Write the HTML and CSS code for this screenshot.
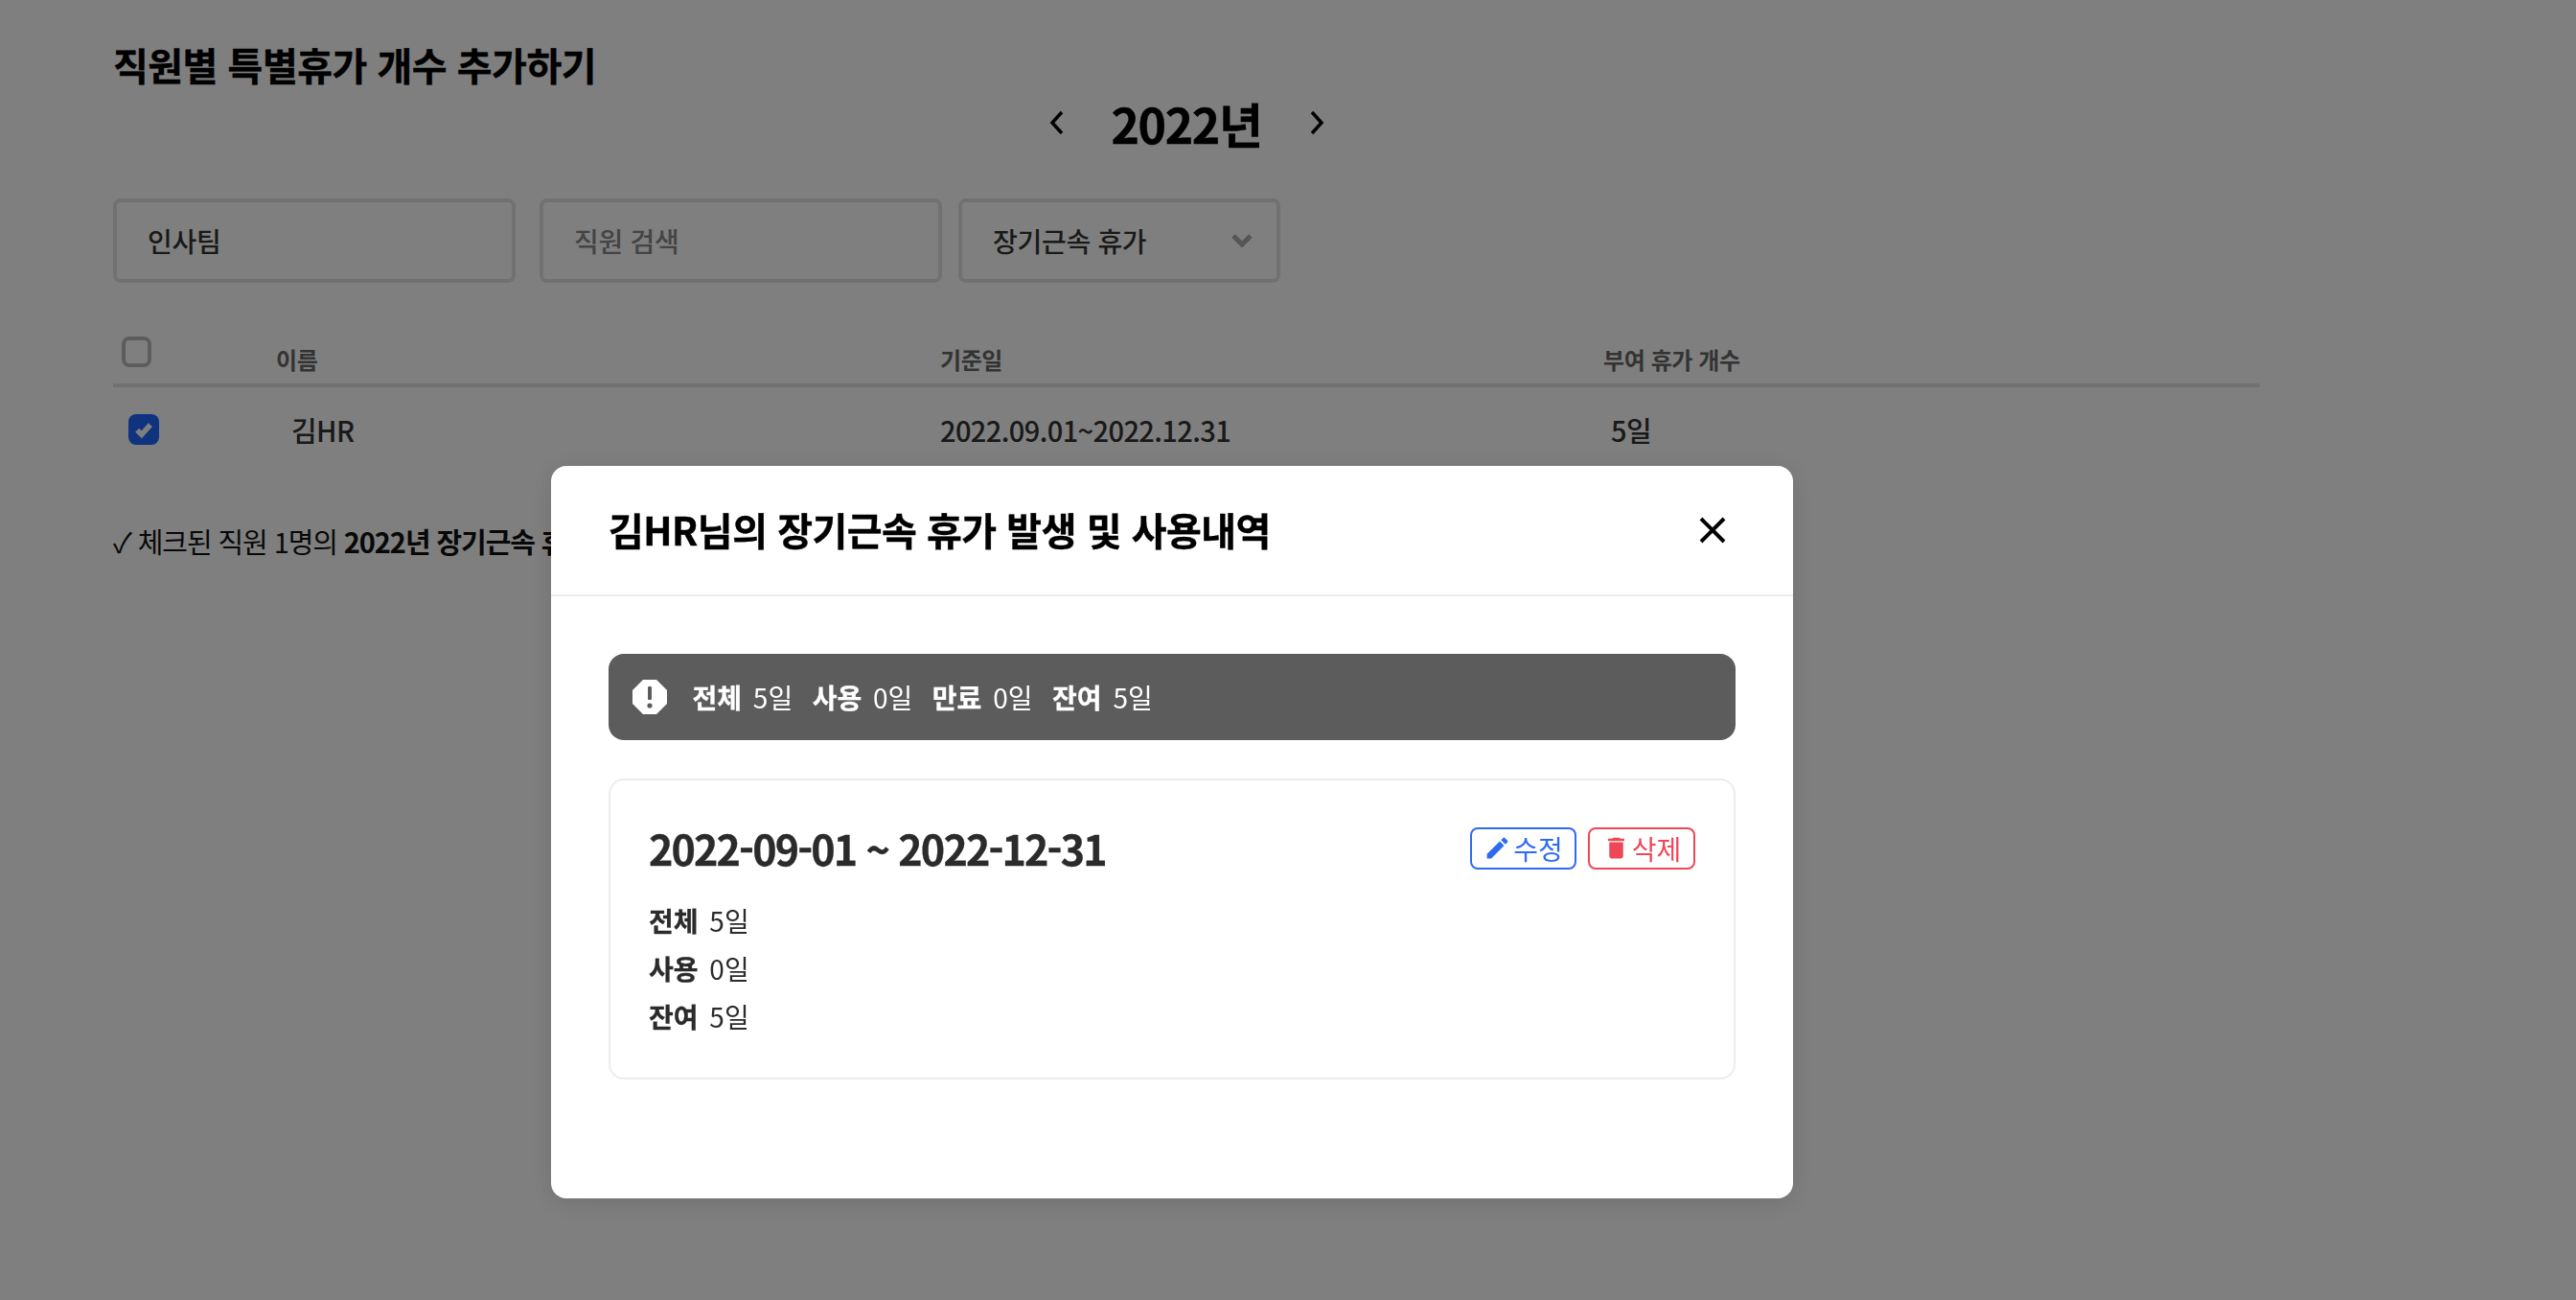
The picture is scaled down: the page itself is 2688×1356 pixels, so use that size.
FILE: index.html
```html
<!DOCTYPE html>
<html lang="ko">
<head>
<meta charset="utf-8">
<title>직원별 특별휴가 개수 추가하기</title>
<link rel="stylesheet" href="styles.css">
</head>
<body>
<main class="page">
  <h1 class="page-title">직원별 특별휴가 개수 추가하기</h1>
  <div class="year-nav">
    <svg class="chev" viewBox="0 0 16 28"><path d="M13 3 3 14l10 11"/></svg>
    <span class="year">2022년</span>
    <svg class="chev" viewBox="0 0 16 28"><path d="M3 3l10 11L3 25"/></svg>
  </div>
  <div class="filters">
    <div class="field field-team">인사팀</div>
    <div class="field field-search">직원 검색</div>
    <div class="field field-type"><span>장기근속 휴가</span>
      <svg class="caret" viewBox="0 0 24 14"><path d="M3 2l9 9 9-9"/></svg>
    </div>
  </div>
  <div class="table">
    <div class="thead">
      <span class="check"></span>
      <span class="th">이름</span>
      <span class="th">기준일</span>
      <span class="th">부여 휴가 개수</span>
    </div>
    <div class="trow">
      <span class="check checked"><svg viewBox="0 0 16 16"><path d="M3 8.500l3.400 3.400L13 4.500"/></svg></span>
      <span class="td td-name">김HR</span>
      <span class="td">2022.09.01~2022.12.31</span>
      <span class="td td-count">5일</span>
    </div>
  </div>
  <p class="summary">✓ 체크된 직원 1명의 <b>2022년 장기근속 휴가</b></p>
</main>

<div class="overlay">
  <section class="modal">
    <header class="modal-head">
      <h2 class="modal-title">김HR님의 장기근속 휴가 발생 및 사용내역</h2>
      <svg class="close" viewBox="0 0 28 28"><path d="M2 2l24 24M26 2 2 26"/></svg>
    </header>
    <div class="modal-body">
      <div class="alert">
        <svg class="alert-icon" viewBox="0 0 36 36"><path class="octagon" d="M11 0h14l11 11v14L25 36H11L0 25V11z"/><rect class="mark" x="16" y="7" width="4" height="14" rx="1"/><circle class="mark" cx="18" cy="27" r="2.600"/></svg>
        <span class="stat"><b>전체</b> 5일</span>
        <span class="stat"><b>사용</b> 0일</span>
        <span class="stat"><b>만료</b> 0일</span>
        <span class="stat"><b>잔여</b> 5일</span>
      </div>
      <article class="card">
        <div class="card-top">
          <h3 class="period">2022-09-01 ~ 2022-12-31</h3>
          <div class="actions">
            <button class="btn btn-edit"><svg viewBox="0 0 24 24"><path d="M3 17.250V21h3.750L17.810 9.940l-3.750-3.750L3 17.250zM20.710 7.040a1 1 0 0 0 0-1.410l-2.340-2.340a1 1 0 0 0-1.410 0l-1.830 1.830 3.750 3.750 1.830-1.830z"/></svg>수정</button>
            <button class="btn btn-del"><svg viewBox="0 0 24 24"><path d="M6 19a2 2 0 0 0 2 2h8a2 2 0 0 0 2-2V7H6v12zM19 4h-3.500l-1-1h-5l-1 1H5v2h14V4z"/></svg>삭제</button>
          </div>
        </div>
        <p class="line"><b>전체</b> 5일</p>
        <p class="line"><b>사용</b> 0일</p>
        <p class="line"><b>잔여</b> 5일</p>
      </article>
    </div>
  </section>
</div>
</body>
</html>
```

FILE: styles.css
```css
* { box-sizing: border-box; }
html, body { margin: 0; height: 100%; overflow: hidden; }
body {
  background: #fff;
  color: #000;
  font-family: "Noto Sans CJK KR", "Noto Sans", sans-serif;
}
.page { padding: 38px 0 0 118px; width: 2358px; }
.page-title { margin: 0; font-size: 40px; line-height: 58px; font-weight: 700; letter-spacing: -0.5px; -webkit-text-stroke: 0.4px #000; }
.year-nav { display: flex; justify-content: center; align-items: center; gap: 49px; height: 70px; margin-top: -3px; }
.year { font-size: 50px; line-height: 70px; font-weight: 700; letter-spacing: -1.4px; -webkit-text-stroke: 0.4px #000; }
.chev { width: 16px; height: 28px; fill: none; stroke: #000; stroke-width: 3.500; }
.filters { display: flex; gap: 25px; margin-top: 44px; }
.field {
  height: 88px; width: 420px; padding: 0 32px;
  border: 4px solid #e2e2e2; border-radius: 8px;
  display: flex; align-items: center; justify-content: space-between;
  font-size: 28px; font-weight: 500; letter-spacing: -0.3px; color: #333;
}
.field-search { color: #888; }
.field-type { width: 336px; margin-left: -8px; padding-right: 24px; }
.caret { width: 24px; height: 14px; fill: none; stroke: #aaa; stroke-width: 5; }
.table { margin-top: 56px; }
.thead, .trow { display: grid; grid-template-columns: 170px 693px 692px 1fr; }
.thead { height: 53px; border-bottom: 4px solid #e2e2e2; align-items: end; }
.th { font-size: 24px; font-weight: 700; color: #666; line-height: 36px; padding-bottom: 8px; letter-spacing: -0.4px; }
.check {
  display: block; width: 31px; height: 32px; margin: 0 0 18px 9px;
  border: 4px solid #bbb; border-radius: 8px;
}
.trow { height: 88px; align-items: center; }
.check.checked {
  margin: 0 0 0 16px; width: 32px; background: #1f66ff; border: 0;
  display: flex; align-items: center; justify-content: center;
}
.check.checked svg { width: 22px; height: 22px; fill: none; stroke: #fff; stroke-width: 4; }
.td { font-size: 29px; font-weight: 500; letter-spacing: -0.6px; color: #333; }
.td-name { padding-left: 16px; }
.td-count { padding-left: 8px; }
.summary { margin: 52px 0 0; font-size: 29px; font-weight: 400; line-height: 40px; letter-spacing: -1.1px; color: #111; }
.summary b { font-weight: 700; }
.overlay {
  position: fixed; inset: 0;
  background: rgba(0, 0, 0, 0.5);
  padding: 486px 0 0 575px;
  display: flex; align-items: flex-start;
}
.modal {
  width: 1296px; height: 764px; background: #fff; border-radius: 16px;
  box-shadow: 0 4px 24px rgba(0, 0, 0, 0.12);
}
.modal-head {
  height: 136px; padding: 0 70px 0 60px;
  border-bottom: 2px solid #ececec;
  display: flex; align-items: center; justify-content: space-between;
}
.modal-title { margin: -2px 0 0; font-size: 40px; font-weight: 700; letter-spacing: -0.5px; -webkit-text-stroke: 0.4px #000; }
.close { width: 28px; height: 28px; fill: none; stroke: #000; stroke-width: 4; }
.modal-body { padding: 60px 60px 0; }
.alert {
  height: 90px; border-radius: 16px; background: #5c5c5c; color: #fff;
  display: flex; align-items: center; gap: 20.500px; padding: 0 25px;
  font-size: 28px;
}
.alert-icon { width: 36px; height: 36px; margin-right: 6px; }
.octagon { fill: #fff; }
.mark { fill: #5c5c5c; }
.card {
  margin-top: 40px; height: 314px; padding: 40px 40px 0;
  border: 2px solid #ececec; border-radius: 16px; color: #2b2b2b;
}
.card-top { display: flex; justify-content: space-between; align-items: center; height: 66px; margin-bottom: 15px; }
.period { margin: -6px 0 0; font-size: 43px; font-weight: 700; letter-spacing: -1.850px; -webkit-text-stroke: 0.3px #2b2b2b; }
.actions { display: flex; gap: 12px; margin-top: -5px; }
.btn {
  height: 44px; width: 111px; padding: 0; background: #fff;
  border: 2px solid currentColor; border-radius: 8px;
  display: flex; align-items: center; justify-content: center; gap: 2px;
  font: 400 28px "Noto Sans CJK KR", sans-serif;
}
.btn svg { width: 29px; height: 29px; fill: currentColor; }
.btn-edit { color: #2f6bf0; }
.btn-del { width: 112px; color: #ef4757; }
.line { margin: 0; font-size: 28px; line-height: 50px; }
.line b, .stat b { margin-right: 4px; -webkit-text-stroke: 0.3px currentColor; }
```
